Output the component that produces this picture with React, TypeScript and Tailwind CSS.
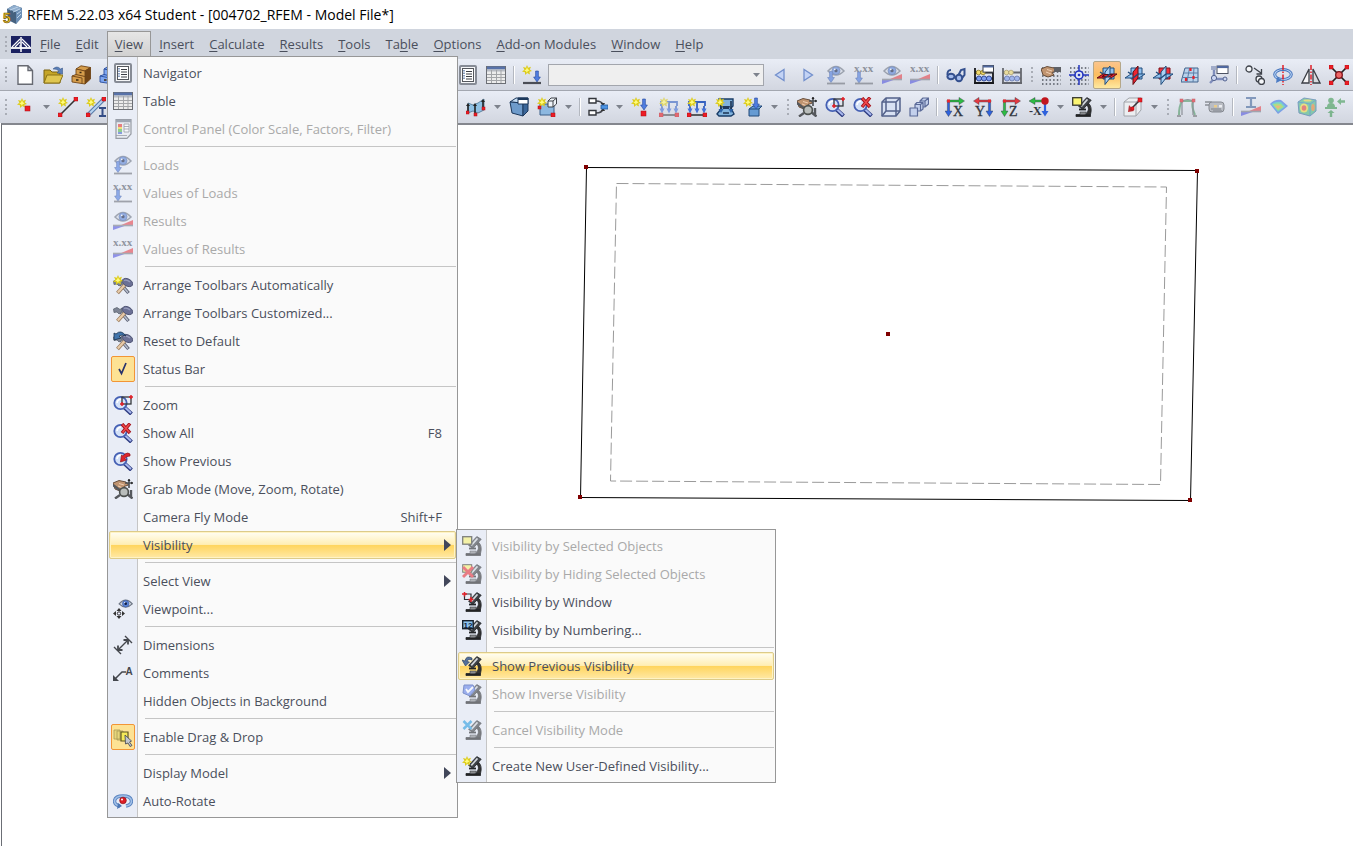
import type { ReactNode } from "react";

type MenuEntry =
  | "-"
  | {
      label: string;
      icon?: string;
      disabled?: boolean;
      shortcut?: string;
      submenu?: boolean;
      checked?: boolean;
      active?: boolean;
    };

const Star = ({ x = 0, y = 0 }: { x?: number; y?: number }) => (
  <g transform={`translate(${x} ${y})`}>
    <path d="M5 0 6.2 2.8 9 1.8 7.8 4.6 10 6 7.4 6.8 8 9.6 5.2 8 3 10 3 7.2 0 6.4 2.4 4.8 1 2 3.8 2.8Z" fill="#dccb1c" />
    <path d="M5 2 5.8 4 7.6 5.4 5.6 6.2 5 8 4 6.2 2.2 5.6 4 4.4Z" fill="#fffb7a" />
  </g>
);

const Red = ({ x, y, s = 4 }: { x: number; y: number; s?: number }) => (
  <rect x={x} y={y} width={s} height={s} fill="#ed1c24" stroke="#a80f14" strokeWidth=".5" />
);

const Eye = ({ y = 0 }: { y?: number }) => (
  <g transform={`translate(0 ${y})`}>
    <path d="M2 6Q10-3 18 6 10 14 2 6Z" fill="#d5dae4" stroke="#6e7684" strokeWidth="1.5" />
    <circle cx="10" cy="5.7" r="4" fill="#5b84d6" stroke="#36579e" strokeWidth=".7" />
    <circle cx="10" cy="5.7" r="1.6" fill="#111d40" />
    <circle cx="8.8" cy="4.4" r=".8" fill="#fff" />
  </g>
);

const DownArrow = ({ x = 0, y = 0 }: { x?: number; y?: number }) => (
  <path
    transform={`translate(${x} ${y})`}
    d="M1.6 0H4.4V6H6.4L3 11 -.4 6H1.6Z"
    fill="#4f7de0"
    stroke="#24489c"
    strokeWidth=".6"
  />
);

const Values = () => (
  <text x="0" y="7" fontSize="11" fontWeight="700" fontFamily="'Liberation Serif', serif" fill="#555a66">
    x.xx
  </text>
);

const Diagram = () => (
  <g>
    <path d="M0 19V14.5H13Z" fill="#5457e0" />
    <path d="M20 9V14.5H7Z" fill="#e8434a" />
    <path d="M0 14.5H20" stroke="#7b7e88" strokeWidth="1.6" />
  </g>
);

const Microscope = () => (
  <g stroke="#222528" strokeLinejoin="round" strokeWidth=".8">
    <path d="M4 17.5H18.5V19.6H4Z" fill="#222" />
    <path d="M14 7.5Q18 10.5 15.5 15L14 17.5H18.5Q20.5 10 16.8 6.5Z" fill="#333" />
    <path d="M7 12.5H14" strokeWidth="1.8" />
    <path d="M14.8.6 19.2 3.2 11 12.4 6.6 9.4Z" fill="#3e4246" />
    <path d="M15.5 2.4 9.3 9.4" stroke="#d4d8dd" strokeWidth="1.6" />
    <path d="M8 15H14.500L13 17.800H8Z" fill="#8b8d90" strokeWidth=".5" />
  </g>
);

const Magnifier = () => (
  <g>
    <path d="M11.5 12.5 18.5 19" stroke="#2c3a80" strokeWidth="4" />
    <path d="M11.8 12.2 18 18" stroke="#a8b8ee" strokeWidth="2" />
    <circle cx="7.5" cy="8" r="6.2" fill="#d4e1f7" stroke="#4560b4" strokeWidth="1.8" />
    <path d="M4 8Q4.5 4.4 8 4.3" fill="none" stroke="#fff" strokeWidth="1.5" />
  </g>
);

const Hammers = () => (
  <g>
    <path d="M7 8 15.5 18" stroke="#5b6173" strokeWidth="3.4" />
    <path d="M7.4 8.5 15 17.5" stroke="#b9bfce" strokeWidth="1.5" />
    <path d="M13 8.500 4.500 18" stroke="#9b7d5f" strokeWidth="3.8" />
    <path d="M13 8.500 4.800 17.600" stroke="#e8cba9" strokeWidth="2.200" />
    <path d="M.5 6 4 4.500 7 6.500 9 5V9L6 11 4 9 1 9.500Z" fill="#7d8494" stroke="#555b69" strokeWidth=".7" />
    <ellipse cx="14.500" cy="7.500" rx="5.600" ry="3.600" transform="rotate(28 14.500 7.500)" fill="#6b7095" stroke="#484d6e" strokeWidth=".8" />
    <path d="M11 5.500Q14 4.500 17 7" fill="none" stroke="#989dbd" strokeWidth="1.200" />
  </g>
);

const Abacus = () => (
  <g>
    <path d="M1 3V19M19 3V19M1 7.5H19M1 13.5H19M0 18H20" stroke="#17181c" strokeWidth="1.8" />
    <circle cx="4.5" cy="7.5" r="2.3" fill="#f0d96b" stroke="#866e14" strokeWidth=".7" />
    <circle cx="9" cy="7.5" r="2.3" fill="#f0d96b" stroke="#866e14" strokeWidth=".7" />
    <circle cx="5" cy="13.5" r="2.5" fill="#7b9bee" stroke="#203785" strokeWidth=".8" />
    <circle cx="10" cy="13.5" r="2.5" fill="#7b9bee" stroke="#203785" strokeWidth=".8" />
    <circle cx="15" cy="13.5" r="2.5" fill="#7b9bee" stroke="#203785" strokeWidth=".8" />
  </g>
);

const Planes = ({ red }: { red: "xy" | "xz" | "yz" }) => (
  <g strokeLinejoin="round" stroke="#1f4a7a" strokeWidth="1">
    <path d="M6 3H17V14H6Z" fill={red === "yz" ? "#f0313b" : "#8fc0ee"} stroke={red === "yz" ? "#7d1118" : "#1f4a7a"} />
    <path d="M0 13 6 9H20L14 13Z" fill={red === "xy" ? "#ee2430" : "#8fc0ee"} stroke={red === "xy" ? "#5f0c12" : "#1f4a7a"} />
    <path d="M8 7 13 1V13L8 19.500Z" fill={red === "xz" ? "#ee2430" : "#a9d0f3"} stroke={red === "xz" ? "#5f0c12" : "#1f4a7a"} />
    {red === "xy" && <path d="M5 11.500 8 9.500H16L12 12Z" fill="#ee2430" stroke="#5f0c12" />}
    <path d="M8 13 13 9M14 13V14M3 7 6 9" fill="none" strokeWidth="1.400" />
  </g>
);

const LoadFrame = () => (
  <g>
    <path d="M2 9V5H18V9M10 5V9" fill="none" stroke="#3561c0" strokeWidth="1.8" />
    <path d="M3 9V13M10 9V13M17 9V13" stroke="#3561c0" strokeWidth="1.8" />
    <path d="M.5 11.500H5.5L3 16.500ZM7.500 11.500H12.500L10 16.500ZM14.500 11.500H19.500L17 16.500Z" fill="#4672d8" />
    <path d="M1 18H19" stroke="#222" strokeWidth="1.4" />
    <Red x={0} y={16} />
    <Red x={16} y={16} />
    <Star />
  </g>
);

const Axes = ({ label, h, v, flip }: { label: string; h: string; v: string; flip?: boolean }) => (
  <g>
    <g transform={flip ? "translate(20 0) scale(-1 1)" : undefined}>
      <path d="M2 3H14V.4L19.5 4 14 7.6V5H2Z" fill={h} stroke="#303640" strokeWidth=".4" />
      <path d="M2.4 5H4.6V14H7L3.5 19.5 0 14H2.4Z" fill={v} stroke="#303640" strokeWidth=".4" />
      <rect x="2" y="2.5" width="3" height="3" fill="#e72830" />
    </g>
    <text
      x={flip ? 2 : 8}
      y="18.500"
      fontSize="14"
      fontFamily="'Liberation Serif', serif"
      fill="#32363f"
      stroke="#32363f"
      strokeWidth=".3"
    >
      {label}
    </text>
  </g>
);

const Hand = () => (
  <g>
    <path d="M0 4 6 1.5 13 3 15.5 6 11 7.5 13 10 7 12 2 10Z" fill="#c09470" stroke="#5c4330" strokeWidth=".9" />
    <path d="M6 4.5 11 6M5 7 10 9" stroke="#f0cfb4" strokeWidth="1" />
  </g>
);

const GridDots = () => (
  <path
    d="M1 3H20M1 7H20M1 11H20M1 15H20M1 19H20"
    stroke="#50555f"
    strokeWidth="1.5"
    strokeDasharray="1.5 2.2"
  />
);

const Chest = ({ fill, dark }: { fill: string; dark: string }) => (
  <g stroke={dark} strokeWidth=".9" strokeLinejoin="round">
    <path d="M5 4 10 .8 19.5 2.5 14 6Z" fill={fill} />
    <path d="M14 6 19.5 2.5V14L14 19Z" fill={dark} />
    <path d="M5 4 14 6V12L5 10Z" fill={fill} />
    <path d="M1 11 5 9.5 14 11.5V19L1 17Z" fill={fill} />
    <path d="M1 11 11 13V18.5" fill="none" />
    <path d="M8.5 7.5H10.5M5 15H7.5" stroke="#3a2a10" strokeWidth="1.6" />
  </g>
);

const GrabMode = () => (
  <g>
    <Hand />
    <path d="M16 0V9M12 4H20" stroke="#4a4d51" strokeWidth="1.6" />
    <path d="M14.4 2 16 0 17.6 2ZM18.2 2.6 20 4 18.2 5.6Z" fill="#222" />
    <path d="M0 6 8 12M2 19.500 7 16M19.500 19.500 14 15M18 11V19" stroke="#55585d" strokeWidth="2.400" />
    <circle cx="11" cy="13" r="4.4" fill="#b9bdbb" stroke="#4c504e" strokeWidth="1.6" />
  </g>
);

const NavList = () => (
  <g>
    <rect x="2" y="1" width="16" height="18" rx="1" fill="#f4f5f7" stroke="#868b95" strokeWidth="2" />
    <rect x="4.5" y="3.5" width="11" height="13" fill="#fff" stroke="#55585e" />
    <path d="M8 6.5H14M8 9H14M8 11.5H14M8 14H14" stroke="#3b3e45" />
    <path d="M6 5V15" stroke="#5b79ab" strokeWidth="1.4" strokeDasharray="1.5 1" />
  </g>
);

const TableGrid = () => (
  <g>
    <rect x=".5" y="1.5" width="19" height="17" fill="#ececec" stroke="#6b6e74" />
    <path d="M1 3H19" stroke="#5872a9" strokeWidth="3" />
    <path d="M1 5.5H19" stroke="#b8bcc4" strokeWidth="2" />
    <path d="M1 9.5H19M1 12.5H19M1 15.5H19M5.5 5V18M10.5 5V18M15 5V18" stroke="#a3a5a8" />
  </g>
);

const icons: Record<string, ReactNode> = {
  new: <path d="M3 .8H13L17.5 5.5V19.2H3ZM13 .8V5.5H17.5" fill="#fff" stroke="#676a72" strokeWidth="1.4" />,
  open: (
    <g strokeLinejoin="round">
      <path d="M1 18V5H7L9 7H17V18Z" fill="#c5a527" stroke="#7a6310" />
      <path d="M1 18 4 10H20L16.5 18Z" fill="#dfc650" stroke="#8b7314" />
      <path d="M10 4Q14 0 17.5 4L19.5 3V9L14 8 16 6Q13.500 3.500 10 4Z" fill="#5a7fb8" stroke="#2c4a7c" strokeWidth=".5" />
    </g>
  ),
  chest: <Chest fill="#d59d4c" dark="#714516" />,
  chestBlue: <Chest fill="#7ea6f0" dark="#284c9c" />,
  node: (
    <g>
      <Star x={2} y={1} />
      <Red x={10} y={9} s={5} />
    </g>
  ),
  line: (
    <g>
      <Star />
      <path d="M2 18 18 2" stroke="#333" strokeWidth="1.6" />
      <Red x={0} y={16} />
      <Red x={16} y={0} />
    </g>
  ),
  member: (
    <g>
      <Star />
      <path d="M2 18 18 2" stroke="#587ba8" strokeWidth="4" />
      <path d="M2 18 18 2" stroke="#b7d4f2" strokeWidth="2" />
      <Red x={0} y={16} />
      <Red x={16} y={0} />
      <path d="M13 11H20M13 19H20M16.5 11V19" stroke="#344d86" strokeWidth="2" />
    </g>
  ),
  navigator: <NavList />,
  table: <TableGrid />,
  control: (
    <g>
      <path d="M3 .7H18V15L14 19.300H3Z" fill="#e9ecf0" stroke="#62666e" strokeWidth="1.2" />
      <path d="M3 2H18" stroke="#6d7787" strokeWidth="2.5" />
      <path d="M5 5H9V8H5Z" fill="#e53535" />
      <path d="M5 8H9V10H5Z" fill="#f2d628" />
      <path d="M5 10H9V13H5Z" fill="#55b948" />
      <path d="M5 13H9V15H5Z" fill="#4668cf" />
      <path d="M11 5H16V13H11ZM11 7.500H16M11 10H16M3 16.500H14" fill="#fff" stroke="#666b75" strokeWidth=".8" />
    </g>
  ),
  newLoad: (
    <g>
      <Star />
      <DownArrow x={12} y={6} />
      <path d="M1 18H19" stroke="#4a4d55" strokeWidth="2.2" />
    </g>
  ),
  prev: <path d="M14 4.500V15.500L5.500 10Z" fill="#c3d3f5" stroke="#7390cc" strokeWidth="1.3" />,
  next: <path d="M6 4.500V15.500L14.500 10Z" fill="#c3d3f5" stroke="#7390cc" strokeWidth="1.3" />,
  loads: (
    <g>
      <Eye />
      <DownArrow x={2} y={6.5} />
      <path d="M1 18.500H19" stroke="#6e717a" strokeWidth="1.8" />
    </g>
  ),
  loadValues: (
    <g>
      <Values />
      <DownArrow x={2} y={7} />
      <path d="M1 18.500H19" stroke="#6e717a" strokeWidth="1.8" />
    </g>
  ),
  results: (
    <g>
      <Diagram />
      <Eye />
    </g>
  ),
  resultValues: (
    <g>
      <Diagram />
      <Values />
    </g>
  ),
  glasses: (
    <g fill="#a3bbed" stroke="#34508f" strokeWidth="2">
      <path d="M1.500 10Q1 5 5 5M12 11 15 5 18.500 4V10L16 13M8 12H10" fill="none" />
      <ellipse cx="5" cy="11.500" rx="3.600" ry="2.800" />
      <ellipse cx="13" cy="13" rx="3.200" ry="3.200" />
    </g>
  ),
  abacusForm: (
    <g>
      <Abacus />
      <rect x="9" y=".6" width="10.500" height="6.500" fill="#fff" stroke="#3a3e48" />
      <path d="M9 1.500H19.500" stroke="#50689e" strokeWidth="2" />
    </g>
  ),
  abacus: <Abacus />,
  gridHand: (
    <g>
      <GridDots />
      <Hand />
      <path d="M13 2H20V7H13Z" fill="#5e6066" />
    </g>
  ),
  gridSnap: (
    <g>
      <GridDots />
      <path d="M10 0V20M0 10H20" stroke="#2436c0" strokeWidth="1.5" />
      <circle cx="10" cy="10" r="4" fill="#dfe5f4" stroke="#2436c0" strokeWidth="1.6" />
      <circle cx="10" cy="10" r="1.300" fill="#2436c0" />
    </g>
  ),
  planeXY: <Planes red="xy" />,
  planeXZ: <Planes red="xz" />,
  planeYZ: <Planes red="yz" />,
  planeGrid: (
    <g>
      <path d="M4 3H17V17H0Z" fill="#bad3ec" stroke="#41638d" />
      <path d="M3 8H17M2 12.500H17M8.500 3 6 17M13 3 12 17" stroke="#5c7fa8" />
      <path d="M9.500 3V6M12.500 11V14M5 13V16" stroke="#e4222b" strokeWidth="2.200" />
    </g>
  ),
  flowForm: (
    <g>
      <path d="M5 4V14H17M5 14 1 18" fill="none" stroke="#7f8dbb" strokeWidth="2.400" />
      <circle cx="5" cy="13" r="2.600" fill="#cbd5f2" stroke="#52628d" />
      <circle cx="16" cy="14" r="2" fill="#cbd5f2" stroke="#52628d" />
      <rect x="8" y="1" width="11" height="7.500" fill="#fff" stroke="#4d5363" />
      <path d="M8 2H19.500" stroke="#50689e" strokeWidth="2.200" />
      <path d="M2 1H7V5H2Z" fill="#a1acc9" />
    </g>
  ),
  copyNode: (
    <g fill="#f5f7fa" stroke="#3f434b" strokeWidth="1.300">
      <circle cx="4" cy="4" r="3" />
      <circle cx="14" cy="14" r="3" />
      <circle cx="16.500" cy="16.500" r="3" />
      <path d="M9 3 16 8M16.500 4V9H11.500" fill="none" />
    </g>
  ),
  rotate: (
    <g>
      <ellipse cx="10" cy="9.500" rx="8.300" ry="5" fill="none" stroke="#3f6fba" strokeWidth="3" />
      <ellipse cx="10" cy="9.500" rx="8.300" ry="5" fill="none" stroke="#b4cff0" strokeWidth="1.200" />
      <path d="M4 12 3 18 9 15Z" fill="#4c7cc4" />
      <path d="M10 0V20" stroke="#e01f28" strokeWidth="1.500" strokeDasharray="5 1.500 1.500 1.500" />
    </g>
  ),
  mirror: (
    <g>
      <path d="M8 4V18H1Z" fill="#f5f5f7" stroke="#3b3e45" strokeWidth="1.300" />
      <path d="M12 4V18H19Z" fill="#d7d9dd" stroke="#3b3e45" strokeWidth="1.300" />
      <path d="M10 0V20" stroke="#e01f28" strokeWidth="1.500" strokeDasharray="5 1.500 1.500 1.500" />
    </g>
  ),
  connect: (
    <g>
      <path d="M2 2 18 18M18 2 2 18" stroke="#222" strokeWidth="1.700" />
      <Red x={0} y={0} />
      <Red x={16} y={0} />
      <Red x={0} y={16} />
      <Red x={16} y={16} />
      <circle cx="10" cy="10" r="3.300" fill="#e66" stroke="#7c1218" strokeWidth="1.300" />
    </g>
  ),
  surface: (
    <g>
      <path d="M2 6 7 8 12 6 18 2V13L12 16 7 14 2 16Z" fill="#8fc1e4" stroke="#4b7391" strokeWidth=".8" />
      <path d="M2 8V15M9 8V16M17 4V11" stroke="#222" strokeWidth="1.600" />
      <path d="M0 9 2 6 4 9ZM7 9 9 6 11 9ZM15 5 17 2 19 5Z" fill="#222" />
      <Red x={0} y={14} s={3} />
      <Red x={8} y={16} s={3} />
      <Red x={16} y={10} s={3} />
    </g>
  ),
  solid: (
    <g strokeLinejoin="round" stroke="#1c385c">
      <path d="M1 5 7 1H19L14 6Z" fill="#c4dcf4" />
      <path d="M1 5 14 6V19L3 16Z" fill="#6e9bcb" />
      <path d="M14 6 19 1V14L14 19Z" fill="#3b6698" />
      <rect x="9" y="1" width="10" height="6" fill="#fff" />
      <path d="M9 2H19" strokeWidth="2" />
    </g>
  ),
  opening: (
    <g>
      <path d="M3 7H17V18H3Z" fill="#8db8e0" stroke="#3b5f88" />
      <path d="M11 4 14 1H19.500V7L16 10H11ZM11 4H16V10M16 4 19.500 1" fill="#eef3f8" stroke="#3e4249" />
      <Star />
      <Red x={1} y={9} s={3} />
      <Red x={14} y={16} s={4} />
    </g>
  ),
  combine: (
    <g>
      <path d="M8 4Q14 4 15 8M8 16Q14 16 15 12" fill="none" stroke="#42454d" strokeWidth="1.500" />
      <path d="M12.500 6 17 6 15.500 9ZM12.500 14 17 14 15.500 11Z" fill="#333" />
      <path d="M1 1.500H8V6H1ZM1 13.500H8V18H1Z" fill="#fff" stroke="#33363c" strokeWidth="1.400" />
      <path d="M13 8H20V12H13Z" fill="#4d94e4" stroke="#24599b" strokeWidth=".8" />
    </g>
  ),
  nodeLoad: (
    <g>
      <Star />
      <DownArrow x={10} y={2} />
      <Red x={10} y={14} s={5} />
    </g>
  ),
  frameLoad: <LoadFrame />,
  surfaceLoad: (
    <g>
      <path d="M4 2H18V9L16 11 19 17 16 19H4L2 17 6 12Z" fill="#80b2dc" stroke="#193c67" strokeWidth="1.400" />
      <path d="M6 4V13M16 4V13M8 16H14" stroke="#1d3353" strokeWidth="1.600" />
      <path d="M7 9H15L14 12H8Z" fill="#1f3a5e" />
      <path d="M3.500 12H8.500L6 16ZM13.500 12H18.500L16 16Z" fill="#2d63a8" />
      <Star />
    </g>
  ),
  solidLoad: (
    <g>
      <path d="M6 12 10 9H19L16 12V19H6Z" fill="#669bd3" stroke="#214878" />
      <path d="M6 12H16L19 9" fill="none" stroke="#214878" />
      <Star />
      <DownArrow x={10} y={1} />
    </g>
  ),
  grab: <GrabMode />,
  zoom: (
    <g>
      <Magnifier />
      <rect x="9" y="2" width="9" height="7" fill="none" stroke="#34363b" strokeWidth="1.300" />
      <path d="M16 2H20M18 0V4M7 9H11M9 7V11" stroke="#e3212a" strokeWidth="1.500" />
    </g>
  ),
  zoomAll: (
    <g>
      <Magnifier />
      <path d="M9 1 17 10M17 .5 9 10" stroke="#a6121a" strokeWidth="3.400" />
      <path d="M9.500 1.500 16.500 9.500M16.500 1 9.500 9.500" stroke="#f04a4d" strokeWidth="1.500" />
    </g>
  ),
  zoomPrev: (
    <g>
      <Magnifier />
      <path d="M17 3Q15 1 12 3L10 5 8.500 4 7.500 11 13.500 9 12 7.500Q13 5 17 5Z" fill="#de242d" stroke="#8d1218" strokeWidth=".7" />
    </g>
  ),
  wireBox: (
    <g fill="none" stroke="#53618b" strokeWidth="1.500" strokeLinejoin="round">
      <path d="M1 5 5 1H19V14L15 19H1Z" fill="#d8e1f3" />
      <path d="M1 5H15V19M15 5 19 1M5 1V14H19M5 14 1 19" />
    </g>
  ),
  boxes: (
    <g fill="#c3d0ec" stroke="#5b6a98" strokeWidth="1.200" strokeLinejoin="round">
      <path d="M11 4 14 1H19.500V7L16 10H11ZM11 4H16V10M16 4 19.500 1" />
      <path d="M6 7.500 8 5.500H14V12L11.500 14H6ZM6 7.500H11.500V14M11.500 7.500 14 5.500" />
      <path d="M1 11H8.500V19H1Z" />
    </g>
  ),
  axisX: <Axes label="X" h="#2dbb43" v="#2f62dc" />,
  axisY: <Axes label="Y" h="#e43a42" v="#2f62dc" flip />,
  axisZ: <Axes label="Z" h="#e43a42" v="#2dbb43" />,
  axisNegX: (
    <g>
      <path d="M0 4 6 .5V3H15V5H6V7.500Z" fill="#2dbb43" stroke="#303640" strokeWidth=".4" />
      <path d="M14.900 6H17.100V14H19.500L16 19.500 12.500 14H14.900Z" fill="#2f62dc" />
      <circle cx="16" cy="4" r="3.700" fill="#c1151d" />
      <text x="0" y="18" fontSize="12" fontWeight="700" fontFamily="'Liberation Serif', serif" fill="#32363f">
        -X
      </text>
    </g>
  ),
  visSelected: (
    <g>
      <Microscope />
      <rect x=".7" y=".7" width="9" height="7.500" fill="#fbf573" stroke="#36372d" strokeWidth="1.300" />
    </g>
  ),
  visHide: (
    <g>
      <Microscope />
      <rect x=".7" y=".7" width="9" height="7.500" fill="#fbf573" stroke="#36372d" />
      <path d="M1 3 11 13M11 3 1 13" stroke="#e8303a" strokeWidth="3" />
    </g>
  ),
  visWindow: (
    <g>
      <Microscope />
      <path d="M2.500 2H9V7.500H2.500Z" fill="none" stroke="#303238" strokeWidth="1.200" />
      <path d="M0 2H5M2.500 0V4.500M6.500 7.500H11.500M9 5V10" stroke="#e3212a" strokeWidth="1.500" />
    </g>
  ),
  visNumber: (
    <g>
      <Microscope />
      <rect x=".7" y=".7" width="10.500" height="8" fill="#8ec5ee" stroke="#17202b" strokeWidth="1.400" />
      <text x="1.500" y="7.700" fontSize="8" fontWeight="700" fontFamily="'Liberation Sans', sans-serif" fill="#11243a">
        12
      </text>
    </g>
  ),
  visPrev: (
    <g>
      <Microscope />
      <path d="M10 2Q4-1 3 5L0 4 3.500 10 7.500 6 5 5.500Q6 2.500 10 4Z" fill="#54719c" stroke="#233a5c" strokeWidth=".6" />
    </g>
  ),
  visInverse: (
    <g>
      <Microscope />
      <path d="M2 1H11L13 6 8 12 1 9Z" fill="#6685e8" stroke="#3453ad" />
      <path d="M4 5 6 8 11 3" fill="none" stroke="#fff" strokeWidth="1.800" />
    </g>
  ),
  visCancel: (
    <g>
      <Microscope />
      <path d="M1.500 1 9.500 9M9.500 1 1.500 9" stroke="#2b9ce0" strokeWidth="2.500" />
    </g>
  ),
  visCreate: (
    <g>
      <Microscope />
      <Star />
    </g>
  ),
  section: (
    <g>
      <path d="M1 5 6 1H18V13L13 19H1ZM1 5H13V19M13 5 18 1" fill="#eceef1" stroke="#a1a4aa" />
      <path d="M9 11 17 3" stroke="#34363b" strokeWidth="1.600" />
      <path d="M6 8 11 14 5 15Z" fill="#b83036" />
      <Red x={15} y={1} s={4} />
      <Red x={8} y={10} s={3} />
    </g>
  ),
  deform: (
    <g>
      <path d="M2 18Q2 9 5 4H16Q14 9 18 18" fill="none" stroke="#4f9865" strokeWidth="2" />
      <path d="M5 18V4Q11 1 16 4V18" fill="none" stroke="#595d64" strokeWidth="1.200" />
      <Red x={3} y={2} s={3} />
      <Red x={15} y={2} s={3} />
      <path d="M0 19H4M16 19H20" stroke="#555" strokeWidth="1.500" />
    </g>
  ),
  camera: (
    <g>
      <path d="M0 5H6V8H0" fill="none" stroke="#53585e" strokeWidth="1.600" />
      <rect x="4" y="5" width="15" height="10" rx="3" fill="#a1a4aa" stroke="#4b4f55" />
      <path d="M6 12H16M8 14H17" stroke="#60646c" strokeWidth="1.500" />
      <path d="M9 8H12V10.500H9Z" fill="#f1bd4a" />
      <path d="M14 8H17V10.500H14Z" fill="#f4f4f4" />
    </g>
  ),
  memberResult: (
    <g>
      <path d="M5 1H15M5 10H15M10 1V10" stroke="#44669b" strokeWidth="2.200" />
      <Diagram />
    </g>
  ),
  surfaceResult: (
    <g>
      <path d="M1 7Q6 2 12 3L19 9 9 17Z" fill="#3e75e5" />
      <path d="M2.500 7Q7 4 12 5L16.500 9.500 9 15Z" fill="#35c6bb" />
      <path d="M4 7.500Q8 6 12 7L14.500 10 9 13.500Z" fill="#8fdb3d" />
      <path d="M6 9Q9 8 12 9L9 12Z" fill="#f59a3a" />
    </g>
  ),
  solidResult: (
    <g>
      <path d="M1 5 7 1 19 3V14L13 19 2 16Z" fill="#4dbb83" stroke="#3670a0" />
      <path d="M13 7V19M1 5 13 7 19 3" fill="none" stroke="#2f7fbb" />
      <ellipse cx="7" cy="11" rx="4" ry="4.500" fill="#f1dd3d" />
      <ellipse cx="7" cy="11" rx="2.300" ry="2.700" fill="#e5463b" />
      <ellipse cx="16" cy="10.500" rx="1.700" ry="3.500" fill="#e9822f" />
      <ellipse cx="10.500" cy="3.500" rx="4" ry="1" fill="#e9d23f" />
    </g>
  ),
  support: (
    <g fill="#3f9a53">
      <circle cx="6" cy="3.500" r="2.800" />
      <path d="M2 10Q2 6 6 6T10 10H12V12H0V10ZM12 4.500 16 1V3.300H20V5.700H16V8ZM6 13 9.500 16H7.200V20H4.800V16H2.500Z" />
    </g>
  ),
  arrangeAuto: (
    <g>
      <Hammers />
      <Star />
    </g>
  ),
  arrange: <Hammers />,
  arrangeReset: (
    <g>
      <Hammers />
      <path d="M13 5Q8-2 3 3L1 2V9L8 7 6 5Q9 3 13 5Z" fill="#4175ad" stroke="#18314e" strokeWidth=".8" />
    </g>
  ),
  check: <path d="M6 10 8.500 14.500 13 4" fill="none" stroke="#28336b" strokeWidth="1.700" />,
  viewpoint: (
    <g>
      <g transform="translate(4.500 0) scale(.82)">
        <Eye />
      </g>
      <path d="M6 9 8.500 12H3.500ZM6 20 3.500 17H8.500ZM0 14.500 3 12V17ZM12 14.500 9 12V17Z" fill="#333" />
      <circle cx="6" cy="14.500" r="1.700" fill="#eef" stroke="#333" />
    </g>
  ),
  dimensions: (
    <g stroke="#44474d" strokeWidth="1.400" fill="none">
      <path d="M1 12 8 19M12 1 19 8M5 15 15 5" />
      <path d="M5 10.500V15H9.500M10.500 5H15V9.500" strokeWidth="1.800" />
    </g>
  ),
  comments: (
    <g>
      <path d="M2 16 9 9H13" fill="none" stroke="#44474d" strokeWidth="1.500" />
      <path d="M0 18V12L6 18Z" fill="#44474d" />
      <text x="12.500" y="12" fontSize="10" fontWeight="700" fontFamily="'Liberation Sans', sans-serif" fill="#44474d">
        A
      </text>
    </g>
  ),
  drag: (
    <g>
      <path d="M1 3H7V12H1ZM4 4H10V13H4Z" fill="#e6d67a" stroke="#a89a55" strokeWidth=".8" />
      <path d="M8 5H15V14H8Z" fill="#f5ea58" stroke="#5f5722" strokeWidth="1.200" />
      <path d="M12 8 18.500 14 16.500 15 19 18.500 17 19.500 15 16 12.500 17Z" fill="#c2c6ce" stroke="#4d5058" strokeWidth=".9" />
    </g>
  ),
  autoRotate: (
    <g>
      <path d="M7 15Q1.500 14 1.500 10 2 5 10 5T18.500 10Q18.500 14 13 15" fill="none" stroke="#5c86c2" strokeWidth="3.400" />
      <path d="M7 15Q1.500 14 1.500 10 2 5 10 5T18.500 10Q18.500 14 13 15" fill="none" stroke="#a3c1e8" strokeWidth="1.500" />
      <path d="M5 12 9 15 4 18Z" fill="#4c76b4" />
      <circle cx="10" cy="9.500" r="3.300" fill="#dd1c24" stroke="#8d1015" strokeWidth=".7" />
      <circle cx="9" cy="8.500" r="1" fill="#fff" />
    </g>
  ),
};

const Icon = ({ name, faded }: { name: string; faded?: boolean }) => (
  <svg viewBox="0 0 20 20" className={faded ? "size-5 shrink-0 opacity-60" : "size-5 shrink-0"} aria-hidden="true">
    {icons[name]}
  </svg>
);

const Tool = ({ name, faded, active }: { name: string; faded?: boolean; active?: boolean }) => (
  <button
    type="button"
    aria-label={name}
    disabled={faded}
    className={
      active
        ? "flex h-7 w-7 shrink-0 items-center justify-center rounded-xs border border-[#b5a789] bg-linear-to-b from-[#fbc48c] via-[#fbbd5e] to-[#fee9a0]"
        : "flex h-7 w-7 shrink-0 items-center justify-center"
    }
  >
    <Icon name={name} faded={faded} />
  </button>
);

const Caret = () => (
  <svg viewBox="0 0 7 4" className="h-1 w-[7px]" aria-hidden="true">
    <path d="M0 0H7L3.5 4Z" fill="#7d828c" />
  </svg>
);

const Drop = () => (
  <button type="button" aria-label="More" className="flex h-7 w-[15px] shrink-0 items-center justify-center">
    <Caret />
  </button>
);

const Divider = () => (
  <div className="flex w-2 shrink-0 justify-center">
    <span className="h-[18px] w-[2px] border-r border-white bg-[#b4b8c0]" />
  </div>
);

const Grip = () => (
  <div className="flex h-4 w-[11px] shrink-0 flex-col items-center justify-between">
    <span className="size-[2px] bg-[#a9adb6]" />
    <span className="size-[2px] bg-[#a9adb6]" />
    <span className="size-[2px] bg-[#a9adb6]" />
    <span className="size-[2px] bg-[#a9adb6]" />
  </div>
);

// "|" is a divider, "v" a drop-down arrow, "~" a greyed tool, "*" the pressed one
const Tools = ({ list }: { list: string }) => (
  <>
    {list.split(" ").map((t, i) => {
      if (t === "|") return <Divider key={i} />;
      if (t === "v") return <Drop key={i} />;
      return <Tool key={i} name={t.replace(/^[~*]/, "")} faded={t[0] === "~"} active={t[0] === "*"} />;
    })}
  </>
);

const menus = ["_File", "_Edit", "_View", "_Insert", "_Calculate", "_Results", "_Tools", "Ta_ble", "_Options", "_Add-on Modules", "_Window", "_Help"];

const viewMenu: MenuEntry[] = [
  { label: "Navigator", icon: "navigator" },
  { label: "Table", icon: "table" },
  { label: "Control Panel (Color Scale, Factors, Filter)", icon: "control", disabled: true },
  "-",
  { label: "Loads", icon: "loads", disabled: true },
  { label: "Values of Loads", icon: "loadValues", disabled: true },
  { label: "Results", icon: "results", disabled: true },
  { label: "Values of Results", icon: "resultValues", disabled: true },
  "-",
  { label: "Arrange Toolbars Automatically", icon: "arrangeAuto" },
  { label: "Arrange Toolbars Customized...", icon: "arrange" },
  { label: "Reset to Default", icon: "arrangeReset" },
  { label: "Status Bar", icon: "check", checked: true },
  "-",
  { label: "Zoom", icon: "zoom" },
  { label: "Show All", icon: "zoomAll", shortcut: "F8" },
  { label: "Show Previous", icon: "zoomPrev" },
  { label: "Grab Mode (Move, Zoom, Rotate)", icon: "grab" },
  { label: "Camera Fly Mode", shortcut: "Shift+F" },
  { label: "Visibility", submenu: true, active: true },
  "-",
  { label: "Select View", submenu: true },
  { label: "Viewpoint...", icon: "viewpoint" },
  "-",
  { label: "Dimensions", icon: "dimensions" },
  { label: "Comments", icon: "comments" },
  { label: "Hidden Objects in Background" },
  "-",
  { label: "Enable Drag & Drop", icon: "drag", checked: true },
  "-",
  { label: "Display Model", submenu: true },
  { label: "Auto-Rotate", icon: "autoRotate" },
];

const visibilityMenu: MenuEntry[] = [
  { label: "Visibility by Selected Objects", icon: "visSelected", disabled: true },
  { label: "Visibility by Hiding Selected Objects", icon: "visHide", disabled: true },
  { label: "Visibility by Window", icon: "visWindow" },
  { label: "Visibility by Numbering...", icon: "visNumber" },
  "-",
  { label: "Show Previous Visibility", icon: "visPrev", active: true },
  { label: "Show Inverse Visibility", icon: "visInverse", disabled: true },
  "-",
  { label: "Cancel Visibility Mode", icon: "visCancel", disabled: true },
  "-",
  { label: "Create New User-Defined Visibility...", icon: "visCreate" },
];

const Menu = ({ entries, label }: { entries: MenuEntry[]; label: string }) => (
  <div
    role="menu"
    aria-label={label}
    className="border border-[#979797] bg-[linear-gradient(to_right,#e9edf6_29px,#c5c5c5_29px,#c5c5c5_30px,#fafafa_30px)] px-px py-[2px]"
  >
    {entries.map((e, i) =>
      e === "-" ? (
        <div key={i} role="separator" className="h-2 pt-[3px] pl-9">
          <div className="h-px bg-[#c5c5c5]" />
        </div>
      ) : (
        <button
          key={i}
          type="button"
          role="menuitem"
          disabled={e.disabled}
          className={
            e.active
              ? "flex h-7 w-full items-center rounded-xs border border-[#dccb8a] bg-[linear-gradient(to_bottom,#fffef4,#ffeeb4_48%,#ffd45c_50%,#ffe9a6)] pr-1 pl-px text-left text-[#4a4f5c] shadow-[inset_0_0_0_1px_#fff3c4]"
              : "flex h-7 w-full items-center border border-transparent pr-1 pl-px text-left text-[#4a4f5c] disabled:text-[#a9a9a9]"
          }
        >
          <span
            className={
              e.checked
                ? "flex h-[26px] w-6 shrink-0 items-center justify-center rounded-xs border border-[#f29536] bg-[#fde294]"
                : "flex h-[26px] w-6 shrink-0 items-center justify-center"
            }
          >
            {e.icon && <Icon name={e.icon} faded={e.disabled} />}
          </span>
          <span className="grow pl-2 whitespace-nowrap">{e.label}</span>
          {e.shortcut && <span className="pr-[9px]">{e.shortcut}</span>}
          {e.submenu && (
            <svg viewBox="0 0 7 12" className="h-3 w-[7px]" aria-hidden="true">
              <path d="M0 0 7 6 0 12Z" fill="#42475a" />
            </svg>
          )}
        </button>
      )
    )}
  </div>
);

const ModelView = () => (
  <svg viewBox="2 125 1351 721" className="block w-full" role="img" aria-label="Model">
    <path d="M586.500 167.500 1197.500 170.500 1190.500 500.500 580.500 497.500Z" fill="none" stroke="#000" />
    <path
      d="M616.500 183.500 1166.500 187 1160.500 484.500 610.500 481Z"
      fill="none"
      stroke="#9a9a9a"
      strokeDasharray="12 4"
    />
    {[[586, 167], [1197, 171], [1190, 500], [580, 497], [888, 334]].map(([x, y]) => (
      <rect key={x} x={x - 2} y={y - 2} width="4" height="4" fill="#800000" />
    ))}
  </svg>
);

const BAR = "flex items-center overflow-hidden bg-linear-to-b from-[#e9edf6] to-[#d2d6e0]";

export default function App() {
  return (
    <div className="relative flex min-h-screen flex-col overflow-hidden bg-white font-['Open_Sans','Noto_Sans',sans-serif] text-[13px] leading-5 text-[#4a4f5c]">
      <header className="flex h-[29px] items-center gap-[5px] pl-[2px] text-sm text-black">
        <svg viewBox="0 0 20 20" className="size-5" aria-hidden="true">
          <path d="M5 4 12 0 20 3V12L14 19 6 15Z" fill="#45617f" />
          <path d="M5 4 12 0 20 3 14 7Z" fill="#8fadcd" />
          <path d="M14 7 20 3V12L14 19Z" fill="#6c8fb6" />
          <path d="M8 5 16 2M11 7 18 4M15 9 19 6M15 13 19 9" stroke="#bcd2e8" />
          <text x="1" y="18" fontSize="14" fontWeight="700" fontFamily="'Liberation Sans', sans-serif" fill="#efc321" stroke="#57420c" strokeWidth=".6">
            5
          </text>
        </svg>
        <h1>RFEM 5.22.03 x64 Student - [004702_RFEM - Model File*]</h1>
      </header>

      <nav className="flex h-[30px] items-start bg-[#d0d5de] pt-px">
        <div className="flex h-7 items-center">
          <Grip />
          <svg viewBox="0 0 20 17" className="h-[17px] w-5" aria-hidden="true">
            <path d="M0 0H20V17H0Z" fill="#1b2261" />
            <path d="M0 12H20" stroke="#fff" strokeWidth="1.800" />
            <path d="M10 1V16" stroke="#fff" strokeWidth="1.500" />
            <path d="M9 3 1 11M9 6 4 11M9 9V11M11 3 19 11M11 6 16 11" stroke="#fff" strokeWidth="1.100" />
          </svg>
        </div>
        <div className="flex gap-px pl-[2px]">
          {menus.map(m => {
            const [before, rest] = m.split("_");
            return (
              <button
                key={m}
                type="button"
                className={
                  m === "_View"
                    ? "mt-px h-[27px] border border-b-0 border-[#979797] bg-linear-to-b from-[#e6e6e6] to-[#cfcfcf] px-[7px] pb-[2px] whitespace-nowrap"
                    : "h-7 px-[7px] whitespace-nowrap"
                }
              >
                {before}
                <u className="underline-offset-2">{rest[0]}</u>
                {rest.slice(1)}
              </button>
            );
          })}
        </div>
      </nav>

      <div className={`${BAR} h-[31px]`}>
        <Grip />
        <Tools list="new open chest chestBlue" />
        <div className="w-[331px] shrink-0" />
        <Tools list="navigator table | newLoad" />
        <select aria-label="Load case" className="mx-[2px] h-[22px] w-[216px] shrink-0 appearance-none border border-[#a3a6ad] bg-[#efefef]" />
        <div className="-ml-4 mr-1 flex w-3 shrink-0 justify-center">
          <Caret />
        </div>
        <Tools list="prev next ~loads ~loadValues ~results ~resultValues | glasses abacusForm ~abacus" />
        <Grip />
        <Tools list="gridHand gridSnap *planeXY planeXZ planeYZ planeGrid flowForm | copyNode rotate mirror connect" />
      </div>
      <div className="h-px bg-[#a3a7b0]" />
      <div className={`${BAR} h-8`}>
        <Grip />
        <Tools list="node v line member" />
        <div className="w-[352px] shrink-0" />
        <Tools list="surface v solid opening v | combine v nodeLoad ~frameLoad frameLoad surfaceLoad solidLoad v" />
        <Grip />
        <Tools list="grab zoom zoomAll wireBox boxes | axisX axisY axisZ axisNegX v visSelected v | section v" />
        <Grip />
        <Tools list="~deform ~camera | ~memberResult ~surfaceResult ~solidResult ~support" />
      </div>
      <main className="ml-px grow border-t-2 border-l border-t-[#84878e] border-l-[#6b6e75]">
        <ModelView />
      </main>

      <div className="absolute top-[56px] left-[107px] w-[351px]">
        <Menu entries={viewMenu} label="View" />
      </div>
      <div className="absolute top-[529px] left-[456px] w-[320px]">
        <Menu entries={visibilityMenu} label="Visibility" />
      </div>
    </div>
  );
}
